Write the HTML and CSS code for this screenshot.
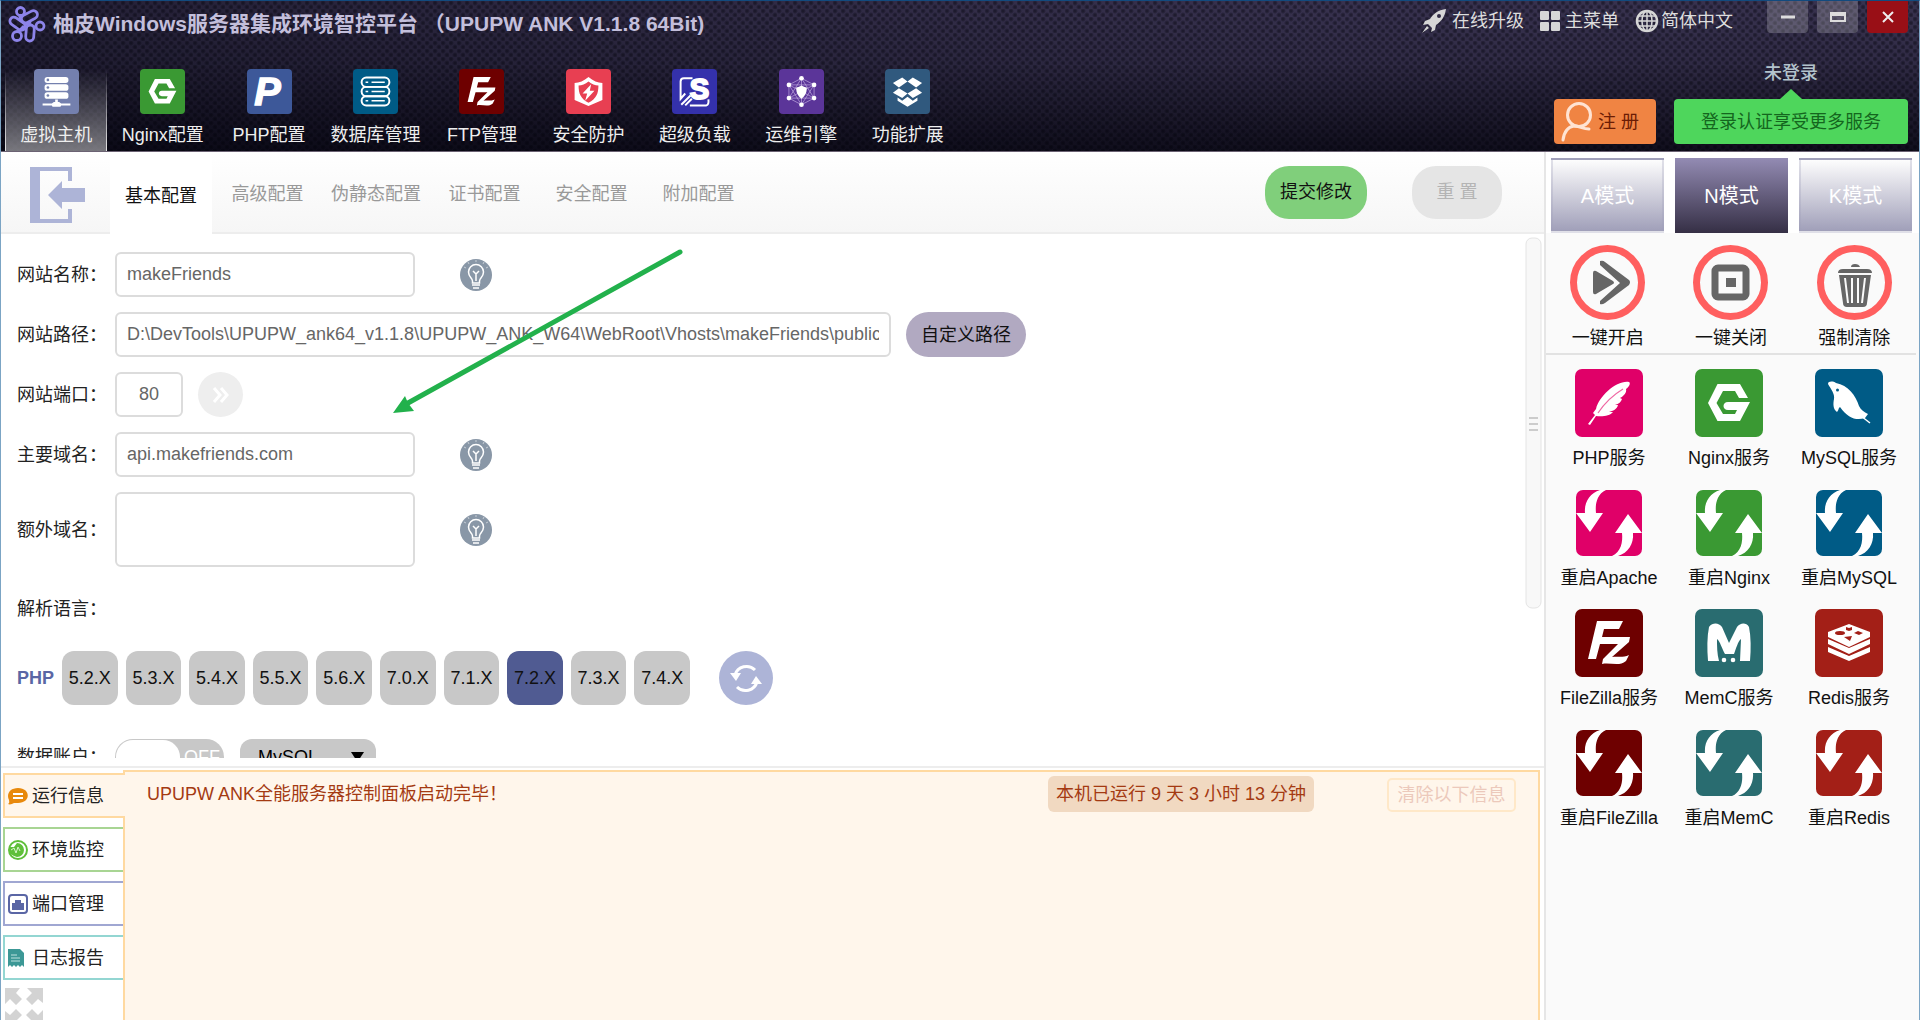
FILE: index.html
```html
<!DOCTYPE html>
<html lang="zh-CN">
<head>
<meta charset="utf-8">
<title>柚皮Windows服务器集成环境智控平台</title>
<link rel="stylesheet" href="styles.css">
</head>
<body>
<svg class="defs" aria-hidden="true">
  <symbol id="i-host" viewBox="0 0 68 68"><g fill="#fff"><rect x="16" y="12" width="36" height="9" rx="4"/><rect x="16" y="23" width="36" height="10" rx="4"/><rect x="16" y="35" width="36" height="10" rx="4"/><path d="M13 52h14l3-2h2v-4h4v4h2l3 2h14v3H41l-1 2H28l-1-2H13z"/></g><g fill="#7480ae"><circle cx="21" cy="16.500" r="2"/><circle cx="21" cy="28" r="2"/><circle cx="21" cy="40" r="2"/></g></symbol>
  <symbol id="i-nginx" viewBox="0 0 68 68"><path fill="#fff" d="M13 34 22.500 15H45l8 14h-9l-4-7H28l-6.500 12L28 45h12l2-4h-9c-6 0-6-8 0-8h22L45 52H22.500z"/></symbol>
  <symbol id="i-db" viewBox="0 0 68 68"><g fill="none" stroke="#fff" stroke-width="3"><rect x="13" y="13" width="42" height="14" rx="7"/><rect x="13" y="27" width="42" height="14" rx="7"/><rect x="13" y="41" width="42" height="14" rx="7"/><path d="M28 20h20M28 34h20M28 48h20M19 20h4M19 34h4M19 48h4" stroke-width="2.500"/></g></symbol>
  <symbol id="i-fz" viewBox="0 0 68 68"><path fill="#fff" d="M22 12h26l-4 8H29l-2 8h28l-1 5-17 15c5-1 11 1 17-2l-3 6c-7 6-16 1-24 3l1-5 15-15H25l-4 15h-8z"/></symbol>
  <symbol id="i-shield" viewBox="0 0 68 68"><path fill="#fff" d="M34 12c7 6 14 9 21 9v26L34 56 13 47V21c7 0 14-3 21-9z"/><path fill="#e83f52" d="M34 19c5 4 10 6 15 6 0 12-3 20-15 26-12-6-15-14-15-26 5 0 10-2 15-6z"/><path fill="#fff" d="M38 23 25 37h7l-3 11 14-15h-7z"/></symbol>
  <symbol id="i-ops" viewBox="0 0 68 68"><g fill="none" stroke="#c5aee4" stroke-width="1"><path d="M34 14 53 24v20L34 54 15 44V24zM34 14v40M15 24l38 20M53 24 15 44M34 14 15 44h38zM34 54 15 24h38z"/></g><g fill="#fff"><circle cx="34" cy="14" r="3.500"/><circle cx="53" cy="24" r="3.500"/><circle cx="53" cy="44" r="3.500"/><circle cx="34" cy="54" r="3.500"/><circle cx="15" cy="44" r="3.500"/><circle cx="15" cy="24" r="3.500"/><path d="M34 25q5 3 8 3c0 9-3 13-8 17-5-4-8-8-8-17q3 0 8-3z"/></g></symbol>
  <symbol id="i-box" viewBox="0 0 68 68"><path fill="#fff" d="m26 13 8 6-13 9-9-7zM42 13l14 8-9 7-13-9zM12 36l9-7 13 8-8 7zM56 36l-9-7-13 8 8 7zM19 43l7 5 8-6 8 6 7-5v5l-15 9-15-9z"/></symbol>
  <symbol id="i-feather" viewBox="0 0 68 68"><path fill="#fff" d="M54 13C42 11 24 27 21 40l-3 4 2 2-7 9 2 1 6-9c6 1 14 0 17-4l-4 0c4-1 8-3 9-7l-3 0c4-1 6-3 7-6l-2-1c4-2 7-6 6-9 3-2 5-6 3-7z"/><path fill="none" stroke="#ef6aa5" stroke-width="1.200" d="M48 20Q33 29 23 44"/></symbol>
  <symbol id="i-dolphin" viewBox="0 0 68 68"><path fill="#fff" d="M13 15c0-3 5-3 8-1 12 2 20 13 23 23 2 4 5 6 9 8l-3 4c-9 3-17 0-25-11-2 1-1 3-3 5-4-3-4-8-3-13 1-5-3-10-6-15z"/><path stroke="#fff" stroke-width="1.500" d="m46 47 9 7"/><circle cx="22.500" cy="21" r="1.500" fill="#005b86"/></symbol>
  <symbol id="i-mem" viewBox="0 0 68 68"><path fill="#fff" d="M13 52c-1-12-1-24 1-34 4-5 10-4 13 0l7 16 8-16c3-4 9-5 12 0 2 10 2 22 1 34H45l1-22c-3 2-5 10-7 15h-9c-3-5-5-13-8-15 0 7 0 15 2 22z"/><circle cx="29" cy="51" r="2.300" fill="#fff"/><circle cx="38" cy="51" r="2.300" fill="#fff"/></symbol>
  <symbol id="i-redis" viewBox="0 0 68 68"><path fill="#fff" d="M34 15l21 8v5l-21 10-21-10v-5zM13 30l21 9 21-9v5l-21 10-21-10zM13 38l21 9 21-9v5L34 52l-21-9z"/><g fill="#a31f17"><ellipse cx="25" cy="24" rx="5" ry="2"/><path d="m31 18 3 1 3-1v3l-3 1-3-1zM39 24l4-2 5 2-4 2zM29 28l8-1-2 5z"/></g></symbol>
  <symbol id="i-restart" viewBox="0 0 66 66"><path fill="#fff" d="M30 0C21 4 19 14 20 23h7L14 42 0 23h9C8 12 14 3 24 0z"/><path fill="#fff" d="M36 66c9-4 11-14 10-23h-7l13-19 14 19h-9c1 11-5 20-15 23z"/></symbol>
  <symbol id="i-bulb" viewBox="0 0 32 32"><circle cx="16" cy="16" r="16" fill="#8997a7"/><g fill="none" stroke="#fff" stroke-width="1.500"><path d="M12.500 24v-2c0-3-4-4-4-9a7.500 7.500 0 0 1 15 0c0 5-4 6-4 9v2zM13 12l3 3 3-3M16 15v7M12 26h8M13 29h6"/><path stroke-width="1" stroke="#c7ced6" d="M16 1v2M8 3l1 2M24 3l-1 2M4 8l2 1M28 8l-2 1"/></g></symbol>
</svg>

<div class="window">
  <header class="top">
    <div class="top-main">
      <h1 class="brand">
        <svg class="logo" viewBox="0 0 36 36" fill="none" stroke="#8d84ea" stroke-width="2.800"><circle cx="11.500" cy="5.500" r="4"/><circle cx="31" cy="20" r="4"/><circle cx="8" cy="30" r="4.500"/><rect x="12" y="7" width="17" height="8" rx="4" transform="rotate(-28 20 11)"/><rect x="0" y="14" width="17" height="8" rx="4" transform="rotate(35 9 18)"/><rect x="17" y="19" width="8" height="16" rx="4" transform="rotate(4 21 27)"/><path d="M11 10v5M15 20l-6 6M17 19l5-3M25 21h3"/></svg>
        <span>柚皮Windows服务器集成环境智控平台 （UPUPW ANK V1.1.8 64Bit)</span>
      </h1>
      <nav class="nav">
        <a href="#" class="nav-item active"><svg class="nav-icon host"><use href="#i-host"/></svg>虚拟主机</a>
        <a href="#" class="nav-item"><svg class="nav-icon green"><use href="#i-nginx"/></svg>Nginx配置</a>
        <a href="#" class="nav-item"><svg class="nav-icon royal" viewBox="0 0 68 68"><text x="11" y="55" class="mark-p">P</text></svg>PHP配置</a>
        <a href="#" class="nav-item"><svg class="nav-icon blue"><use href="#i-db"/></svg>数据库管理</a>
        <a href="#" class="nav-item"><svg class="nav-icon maroon"><use href="#i-fz"/></svg>FTP管理</a>
        <a href="#" class="nav-item"><svg class="nav-icon red"><use href="#i-shield"/></svg>安全防护</a>
        <a href="#" class="nav-item"><svg class="nav-icon indigo" viewBox="0 0 68 68"><path fill="none" stroke="#fff" stroke-width="3" d="M31 14H18q-5 0-5 5v26l7-8M14 54l14-14M20 55l10-10M27 55h25q4-1 3-9"/><text x="27" y="45" class="mark-s">S</text></svg>超级负载</a>
        <a href="#" class="nav-item"><svg class="nav-icon purple"><use href="#i-ops"/></svg>运维引擎</a>
        <a href="#" class="nav-item"><svg class="nav-icon steel"><use href="#i-box"/></svg>功能扩展</a>
      </nav>
    </div>
    <div class="top-side">
      <div class="tools">
        <a href="#" class="tool"><svg width="26" height="26" viewBox="0 0 26 26" fill="#d6d6d6"><path d="M25 1C17 2 12 6 9 11l-5 2-2 4 5-1 4 4-1 4 4-2 1-5c6-4 9-9 10-16zM6 18l-5 7 7-5z"/><circle cx="18" cy="8" r="2" fill="#302b45"/></svg>在线升级</a>
        <a href="#" class="tool"><svg width="20" height="20" viewBox="0 0 20 20" fill="#d6d6d6"><rect width="9" height="9" rx="1"/><rect x="11" width="9" height="9" rx="1"/><rect y="11" width="9" height="9" rx="1"/><rect x="11" y="11" width="9" height="9" rx="1"/></svg>主菜单</a>
        <a href="#" class="tool lang"><svg width="24" height="24" viewBox="0 0 24 24" fill="none" stroke="#d6d6d6" stroke-width="1.500"><circle cx="12" cy="12" r="10" stroke-width="2.500"/><ellipse cx="12" cy="12" rx="5" ry="10"/><path d="M12 2v20M2 12h20M4 7h16M4 17h16"/></svg>简体中文</a>
        <div class="winbtns">
          <button type="button" class="winbtn" aria-label="最小化"><svg width="16" height="16"><path d="M1 8h14" stroke="#ddd" stroke-width="3"/></svg></button>
          <button type="button" class="winbtn" aria-label="最大化"><svg width="18" height="16"><path d="M2 4h14v8H2zM2 6h14" fill="none" stroke="#ddd" stroke-width="2"/></svg></button>
          <button type="button" class="winbtn close" aria-label="关闭"><svg width="16" height="16"><path d="M3 3l10 10M13 3 3 13" stroke="#eee" stroke-width="2"/></svg></button>
        </div>
      </div>
      <div class="account">
        <button type="button" class="register"><svg width="32" height="42" viewBox="0 0 32 42" fill="none" stroke="#ffe3d3" stroke-width="3" stroke-linecap="round"><circle cx="19" cy="14" r="11.500"/><path d="M3 39c1-8 5-13 11-14 5 0 9 3 15 3"/></svg>注 册</button>
        <div class="login">
          <span class="login-state">未登录</span>
          <button type="button" class="login-btn">登录认证享受更多服务</button>
        </div>
      </div>
    </div>
  </header>

  <div class="body">
    <main class="main">
      <div class="tabbar">
        <button type="button" class="back" aria-label="返回"><svg width="56" height="56" viewBox="0 0 56 56"><path fill="#adb4d7" d="M0 0h42v14h-4V4H10v48h28V42h4v14H0zM18 28l14-14v7h23v14H32v7z"/></svg></button>
        <a href="#" class="tab current">基本配置</a>
        <a href="#" class="tab">高级配置</a>
        <a href="#" class="tab">伪静态配置</a>
        <a href="#" class="tab">证书配置</a>
        <a href="#" class="tab">安全配置</a>
        <a href="#" class="tab">附加配置</a>
        <button type="submit" form="site" class="submit">提交修改</button>
        <button type="reset" form="site" class="reset">重 置</button>
      </div>

      <div class="form-pane">
        <form class="form" id="site">
          <div class="row"><label for="name">网站名称：</label><input class="box mid" id="name" value="makeFriends"><svg class="bulb"><use href="#i-bulb"/></svg></div>
          <div class="row"><label for="path">网站路径：</label><input class="box wide" id="path" value="D:\DevTools\UPUPW_ank64_v1.1.8\UPUPW_ANK_W64\WebRoot\Vhosts\makeFriends\public"><button type="button" class="custom">自定义路径</button></div>
          <div class="row"><label for="port">网站端口：</label><input class="box port" id="port" value="80"><button type="button" class="go" aria-label="更多端口"><svg width="18" height="18" viewBox="0 0 18 18" fill="none" stroke="#fff" stroke-width="3"><path d="m2 2 6 7-6 7M9 2l6 7-6 7"/></svg></button></div>
          <div class="row"><label for="domain">主要域名：</label><input class="box mid" id="domain" value="api.makefriends.com"><svg class="bulb"><use href="#i-bulb"/></svg></div>
          <div class="row"><label for="extra">额外域名：</label><textarea class="box mid area" id="extra"></textarea><svg class="bulb"><use href="#i-bulb"/></svg></div>
          <div class="row lang-row"><span>解析语言：</span></div>
          <div class="php">
            <span class="php-name">PHP</span>
            <div class="versions">
              <button type="button">5.2.X</button><button type="button">5.3.X</button><button type="button">5.4.X</button><button type="button">5.5.X</button><button type="button">5.6.X</button><button type="button">7.0.X</button><button type="button">7.1.X</button><button type="button" class="on">7.2.X</button><button type="button">7.3.X</button><button type="button">7.4.X</button>
            </div>
            <button type="button" class="refresh" aria-label="刷新"><svg width="54" height="54" viewBox="0 0 54 54"><g fill="none" stroke="#fff" stroke-width="3"><path d="M16 24a12 12 0 0 1 20-5M38 31a12 12 0 0 1-20 5"/></g><path fill="#fff" d="M11 22h11l-5 8zM43 33H32l5-8z"/></svg></button>
          </div>
          <div class="row db-row"><label for="dbacc">数据账户：</label>
            <span class="switch"><input type="checkbox" id="dbacc"><span class="knob"></span>OFF</span>
            <span class="pick"><select aria-label="数据库类型"><option>MySQL</option></select></span>
          </div>
        </form>
        <svg class="scroll" viewBox="0 0 17 372"><rect x="1" y="1" width="15" height="370" rx="6" fill="#f8f8f8" stroke="#e4e4e4"/><path d="M4 181h9M4 187h9M4 193h9" stroke="#ccc" stroke-width="2"/></svg>
      </div>

      <section class="log">
        <nav class="log-tabs">
          <a href="#" class="log-tab info"><svg width="20" height="20" viewBox="0 0 20 20"><path fill="#e8890c" d="M10 2c13 0 13 15 0 15l-4 0c-2 1-4 2-6 1 2-1 1-3 1-4C-2 8 2 2 10 2z"/><path stroke="#fff" stroke-width="2" d="M5 8h10M5 12h10"/></svg>运行信息</a>
          <a href="#" class="log-tab env"><svg width="20" height="20" viewBox="0 0 20 20"><circle cx="10" cy="10" r="9" fill="#fff" stroke="#5fbf3a" stroke-width="2"/><path fill="#5fbf3a" d="M1 7h5l3-4a7 7 0 0 1 0 14l-3-1-5-3z"/><path d="m3 10 3-2 2 5 2-6 2 4" fill="none" stroke="#d9f5cd"/></svg>环境监控</a>
          <a href="#" class="log-tab port-tab"><svg width="20" height="20" viewBox="0 0 20 20"><rect x="1" y="1" width="18" height="18" rx="3" fill="#fff" stroke="#5a66a5" stroke-width="2"/><path fill="#5a66a5" d="M4 16V9h3V6h6v3h3v7z"/></svg>端口管理</a>
          <a href="#" class="log-tab report"><svg width="20" height="20" viewBox="0 0 20 20"><path fill="#3c9896" d="M0 1h12l4 4v14l-2-2-2 2-2-2-2 2-2-2-2 2-2-2-2 2z"/><path stroke="#bfe3e0" d="M3 7h6M3 10h9M3 13h9"/></svg>日志报告</a>
          <button type="button" class="expand" aria-label="展开"><svg width="38" height="38" viewBox="0 0 38 38"><path fill="#d3d3d3" d="M0 0h15l-4 5 6 6-6 6-6-6-5 5zM38 0v15l-5-4-6 6-6-6 6-6-5-5zM0 38V23l5 4 6-6 6 6-6 6 5 5zM38 38H23l4-5-6-6 6-6 6 6 5-5z"/></svg></button>
        </nav>
        <div class="log-panel">
          <p class="log-text">UPUPW ANK全能服务器控制面板启动完毕！</p>
          <p class="uptime">本机已运行 9 天 3 小时 13 分钟</p>
          <button type="button" class="clear">清除以下信息</button>
        </div>
      </section>

      <svg class="arrow" width="292" height="166" viewBox="0 0 292 166"><path d="M288 3 16 154" stroke="#22b14c" stroke-width="5" stroke-linecap="round"/><path fill="#22b14c" d="M1 164 13 147l3 7 6 8z"/></svg>
    </main>

    <aside class="side">
      <div class="modes"><button type="button">A模式</button><button type="button" class="on">N模式</button><button type="button">K模式</button></div>
      <div class="actions">
        <button type="button"><svg width="75" height="75" viewBox="0 0 75 75"><circle cx="37.500" cy="37.500" r="34" class="ring"/><path fill="#666" d="M23 28q0-3 3-2l17 10q2 2 0 3L26 49q-3 1-3-2z"/><path fill="#666" d="M30 16q3-1 5 1l24 18q2 2 0 5L35 58q-3 2-5 1l0-3 20-18-20-18z"/></svg>一键开启</button>
        <button type="button"><svg width="75" height="75" viewBox="0 0 75 75"><circle cx="37.500" cy="37.500" r="34" class="ring"/><rect x="22" y="23" width="31" height="29" rx="3" fill="none" stroke="#666" stroke-width="7"/><rect x="33" y="33" width="10" height="9" fill="#666"/></svg>一键关闭</button>
        <button type="button"><svg width="75" height="75" viewBox="0 0 75 75"><circle cx="37.500" cy="37.500" r="34" class="ring"/><path fill="#666" d="M21 28q0-4 5-4h24q5 0 5 4zM34 22q0-3 4-3t5 3zM22 30h32l-4 28q0 4-4 4H30q-4 0-4-4z"/><path stroke="#fafafa" stroke-width="2" d="m28 33 3 25M35 33v25M41 33v25M48 33l-3 25"/></svg>强制清除</button>
      </div>
      <div class="services">
        <button type="button"><svg class="svc pink"><use href="#i-feather"/></svg>PHP服务</button>
        <button type="button"><svg class="svc green"><use href="#i-nginx"/></svg>Nginx服务</button>
        <button type="button"><svg class="svc blue"><use href="#i-dolphin"/></svg>MySQL服务</button>
        <button type="button"><svg class="svc again pink"><use href="#i-restart"/></svg>重启Apache</button>
        <button type="button"><svg class="svc again green"><use href="#i-restart"/></svg>重启Nginx</button>
        <button type="button"><svg class="svc again blue"><use href="#i-restart"/></svg>重启MySQL</button>
        <button type="button"><svg class="svc maroon"><use href="#i-fz"/></svg>FileZilla服务</button>
        <button type="button"><svg class="svc teal"><use href="#i-mem"/></svg>MemC服务</button>
        <button type="button"><svg class="svc brick"><use href="#i-redis"/></svg>Redis服务</button>
        <button type="button"><svg class="svc again maroon"><use href="#i-restart"/></svg>重启FileZilla</button>
        <button type="button"><svg class="svc again teal"><use href="#i-restart"/></svg>重启MemC</button>
        <button type="button"><svg class="svc again brick"><use href="#i-restart"/></svg>重启Redis</button>
      </div>
    </aside>
  </div>
</div>
</body>
</html>
```
FILE: styles.css
```css
* { box-sizing: border-box; }

body {
  margin: 0;
  font: 18px/24px "Liberation Sans", "Noto Sans CJK SC", sans-serif;
  color: #222;
}

button, input, textarea, select { font: inherit; color: inherit; margin: 0; }
button { border: 0; padding: 0; background: none; cursor: pointer; }
a { color: inherit; text-decoration: none; }
h1, p { margin: 0; }
svg { display: block; flex: none; }
.defs { position: absolute; width: 0; height: 0; }

.window {
  display: flex;
  flex-direction: column;
  height: 100vh;
  overflow: hidden;
  border: 1px solid #7ba4c4;
  border-top-color: #124a7e;
  border-bottom: 0;
}

/* Header */
.top {
  display: flex;
  justify-content: space-between;
  flex: none;
  height: 151px;
  border-bottom: 1px solid #6b6273;
  background:
    radial-gradient(circle at 2px 2px, rgba(0, 0, 8, .4) 1px, transparent 3px) 0 0 / 8px 8px,
    radial-gradient(circle at 6px 6px, rgba(0, 0, 8, .4) 1px, transparent 3px) 0 0 / 8px 8px,
    linear-gradient(90deg, rgba(0, 0, 10, .35), transparent 70%),
    linear-gradient(#38324f, #302b45 40%, #100e1c);
}
.top-main { display: flex; flex-direction: column; justify-content: space-between; }
.brand {
  display: flex;
  align-items: center;
  gap: 8px;
  padding: 5px 0 0 8px;
  font-size: 21px;
  line-height: 36px;
  color: #c3bfdb;
  white-space: nowrap;
}
.logo { width: 36px; height: 36px; overflow: visible; }
.nav { display: grid; grid-template-columns: repeat(9, 1fr); width: 958px; margin-left: 2px; }
.nav-item {
  display: flex;
  flex-direction: column;
  align-items: center;
  gap: 9px;
  height: 82px;
  margin: 0 2px;
  color: #eee;
  white-space: nowrap;
}
.nav-item.active {
  border: solid transparent;
  border-width: 0 1px;
  background:
    linear-gradient(rgba(255, 255, 255, 0), rgba(255, 255, 255, .8)) 0 0 / 1px 100% no-repeat border-box,
    linear-gradient(rgba(255, 255, 255, 0), rgba(255, 255, 255, .8)) 100% 0 / 1px 100% no-repeat border-box,
    linear-gradient(rgba(255, 255, 255, 0), rgba(255, 255, 255, .45)) border-box;
}
.nav-icon { width: 45px; height: 45px; border-radius: 4px; }
.mark-p { font-size: 60px; font-weight: 700; font-style: italic; fill: #fff; stroke: #fff; stroke-width: 2px; }
.mark-s { font-size: 44px; font-weight: 700; fill: #fff; stroke: #fff; stroke-width: 3px; }
.host { background: #7480ae; }
.royal { background: #3d5899; }
.red { background: #e83f52; }
.indigo { background: #3431ab; }
.purple { background: #5b3599; }
.steel { background: #30597e; }
.green { background: #3a9933; }
.blue { background: #005b86; }
.maroon { background: #6e0000; }
.pink { background: #e00068; }
.teal { background: #296c70; }
.brick { background: #a31f17; }

.top-side { display: flex; flex-direction: column; justify-content: space-between; padding: 0 11px 7px 0; }
.tools { display: flex; color: #ddd; gap: 16px; align-items: center; height: 40px; }
.tool { display: flex; align-items: center; gap: 5px; }
.lang { gap: 2px; }
.winbtns { display: flex; gap: 9px; align-self: flex-start; margin-left: 18px; }
.winbtn {
  display: flex;
  align-items: center;
  justify-content: center;
  width: 41px;
  height: 32px;
  border-radius: 0 0 4px 4px;
  background: rgba(255, 255, 255, .2);
}
.winbtn.close { background: #990f16; }
.account { display: flex; justify-content: flex-end; align-items: flex-end; gap: 18px; }
.register {
  display: flex;
  align-items: center;
  gap: 6px;
  width: 102px;
  height: 45px;
  padding-left: 6px;
  border-radius: 4px;
  background: #f08443;
  color: #6b1c05;
}
.login { display: flex; flex-direction: column; align-items: center; }
.login-state { font-weight: 500; color: #b3c3cc; }
.login-state::after {
  content: "";
  display: block;
  margin: 4px auto 0;
  width: 22px;
  height: 10px;
  background: #4ed65c;
  clip-path: polygon(50% 0, 100% 100%, 0 100%);
}
.login-btn { width: 234px; height: 45px; border-radius: 4px; background: #4ed65c; color: #14661e; }

/* Body */
.body { display: grid; grid-template-columns: 1fr 375px; flex: 1; min-height: 0; }
.main { position: relative; display: flex; flex-direction: column; min-width: 0; min-height: 0; }

.tabbar {
  display: flex;
  align-items: center;
  flex: none;
  height: 82px;
  padding-right: 42px;
  border-bottom: 2px solid #ededed;
  background: linear-gradient(#fff, #f6f6f6);
}
.back { width: 109px; padding: 5px 0 0 29px; }
.tab { min-width: 107px; padding: 4px 10px 0; line-height: 80px; text-align: center; color: #999; }
.tab.current { min-width: 102px; height: 82px; margin-right: 2px; background: #fff; color: #111; align-self: flex-start; }
.submit {
  width: 102px;
  height: 53px;
  margin: 0 45px 0 auto;
  border-radius: 24px;
  background: #80cf7b;
  color: #111;
}
.reset { width: 90px; height: 53px; border-radius: 24px; background: #e5e5e5; color: #b4b4b4; }

.form-pane {
  display: flex;
  justify-content: space-between;
  flex: 1;
  min-height: 0;
  overflow: hidden;
  padding: 0 2px 0 16px;
}
.form { display: flex; flex-direction: column; gap: 15px; padding-top: 18px; }
.row { display: flex; align-items: center; flex: none; }
.row > label { width: 98px; white-space: nowrap; }
.box { height: 45px; padding: 0 10px; border: 2px solid #dcdcdc; border-radius: 6px; background: #fff; color: #666; outline: 0; }
.mid { width: 300px; margin-right: 45px; }
.wide { width: 776px; margin-right: 15px; }
.port { width: 68px; margin-right: 15px; text-align: center; }
.area { height: 75px; resize: none; display: block; }
.bulb { width: 32px; height: 32px; }
.custom { width: 120px; height: 45px; border-radius: 24px; background: #b1a9c1; color: #111; }
.go { display: flex; align-items: center; justify-content: center; width: 45px; height: 45px; border-radius: 50%; background: #eee; }
.lang-row { height: 54px; }
.php { display: flex; align-items: center; flex: none; }
.php-name { width: 45px; font-weight: 700; color: #5a66a5; }
.versions { display: grid; grid-template-columns: repeat(10, 1fr); gap: 8px; width: 628px; }
.versions button { height: 54px; border-radius: 12px; background: #c8c8c8; color: #111; }
.versions .on { background: #505b92; }
.refresh { margin-left: 29px; border-radius: 50%; background: #adb4d7; }
.db-row { margin-top: 19px; }
.switch {
  position: relative;
  display: flex;
  align-items: center;
  justify-content: flex-end;
  width: 109px;
  height: 36px;
  margin-right: 16px;
  padding-right: 4px;
  border-radius: 18px;
  background: #c8c8c8;
  color: #fff;
}
.switch input { position: absolute; inset: 0; width: 100%; height: 100%; margin: 0; opacity: 0; }
.knob { width: 64px; height: 34px; margin: 0 auto 0 1px; border-radius: 18px; background: #fff; }
.pick { position: relative; }
.pick select {
  width: 136px;
  height: 36px;
  padding: 0 18px;
  border: 0;
  border-radius: 12px;
  background: #c8c8c8;
  color: #000;
  appearance: none;
}
.pick::after {
  content: "";
  position: absolute;
  top: 13px;
  right: 12px;
  width: 13px;
  height: 10px;
  background: #000;
  clip-path: polygon(0 0, 100% 0, 50% 100%);
}
.scroll { width: 17px; height: 372px; margin-top: 3px; }

/* Log */
.log {
  display: grid;
  grid-template-columns: 120px 1fr;
  grid-template-rows: 12px 1fr;
  flex: none;
  height: 262px;
  padding: 0 4px 0 2px;
}
.log::before {
  content: "";
  grid-column: 1 / -1;
  margin: 0 -4px 0 -2px;
  background: linear-gradient(#ededed, #ededed) 0 8px / 100% 2px no-repeat;
}
.log-tabs { display: flex; flex-direction: column; gap: 9px; padding-top: 3px; }
.log-tab {
  display: flex;
  align-items: center;
  gap: 4px;
  height: 45px;
  padding-left: 3px;
  border: 2px solid;
  border-right: 0;
  white-space: nowrap;
  flex: none;
}
.info { position: relative; width: 122px; border-color: #ffd9a0; background: #fff6eb; }
.env { border-color: #a8d593; }
.port-tab { border-color: #a0a7d2; }
.report { border-color: #93d6d2; }
.log-tab { color: #222; }
.expand { width: 38px; height: 38px; margin: -1px 0 0 2px; }
.log-panel {
  display: flex;
  align-items: flex-start;
  padding: 4px 22px 0;
  border: 2px solid #ffd9a0;
  border-bottom: 0;
  background: #fff6eb;
  color: #a43a12;
}
.log-text { flex: 1; padding-top: 6px; }
.uptime { padding: 6px 8px; border-radius: 6px; background: #f1d9c1; }
.clear { width: 129px; height: 34px; margin: 2px 0 0 73px; border: 2px solid #ffe8c8; border-radius: 5px; color: #ecc9bb; }

/* Annotation drawn over the form */
.arrow { position: absolute; left: 391px; top: 97px; pointer-events: none; }

/* Sidebar */
.side { border-left: 2px solid #e6e6e6; background: #fafafa; }
.modes { display: grid; grid-template-columns: repeat(3, 1fr); gap: 11px; padding: 6px 7px 0 5px; background: #fff; }
.modes button {
  height: 75px;
  border: 2px solid rgba(160, 160, 185, .3);
  background: linear-gradient(#fdfdfd, #a09fb9);
  color: #fff;
  font-size: 20px;
}
.modes .on { border-color: transparent; background: linear-gradient(#938bb3, #352f45) border-box; }
.actions { display: grid; grid-template-columns: repeat(3, 1fr); margin-right: 3px; padding: 12px 0 2px; border-bottom: 2px solid #e2e2e2; }
.actions button, .services button { display: flex; flex-direction: column; align-items: center; color: #111; white-space: nowrap; }
.actions button { gap: 6px; height: 106px; }
.ring { fill: none; stroke: #ff5f5f; stroke-width: 7; }
.services { display: grid; grid-template-columns: repeat(3, 120px); grid-auto-rows: 120px; padding: 14px 0 0 3px; }
.services button { gap: 9px; }
.svc { width: 68px; height: 68px; border-radius: 7px; }
.svc.again { width: 66px; height: 66px; margin: 1px; }
```
